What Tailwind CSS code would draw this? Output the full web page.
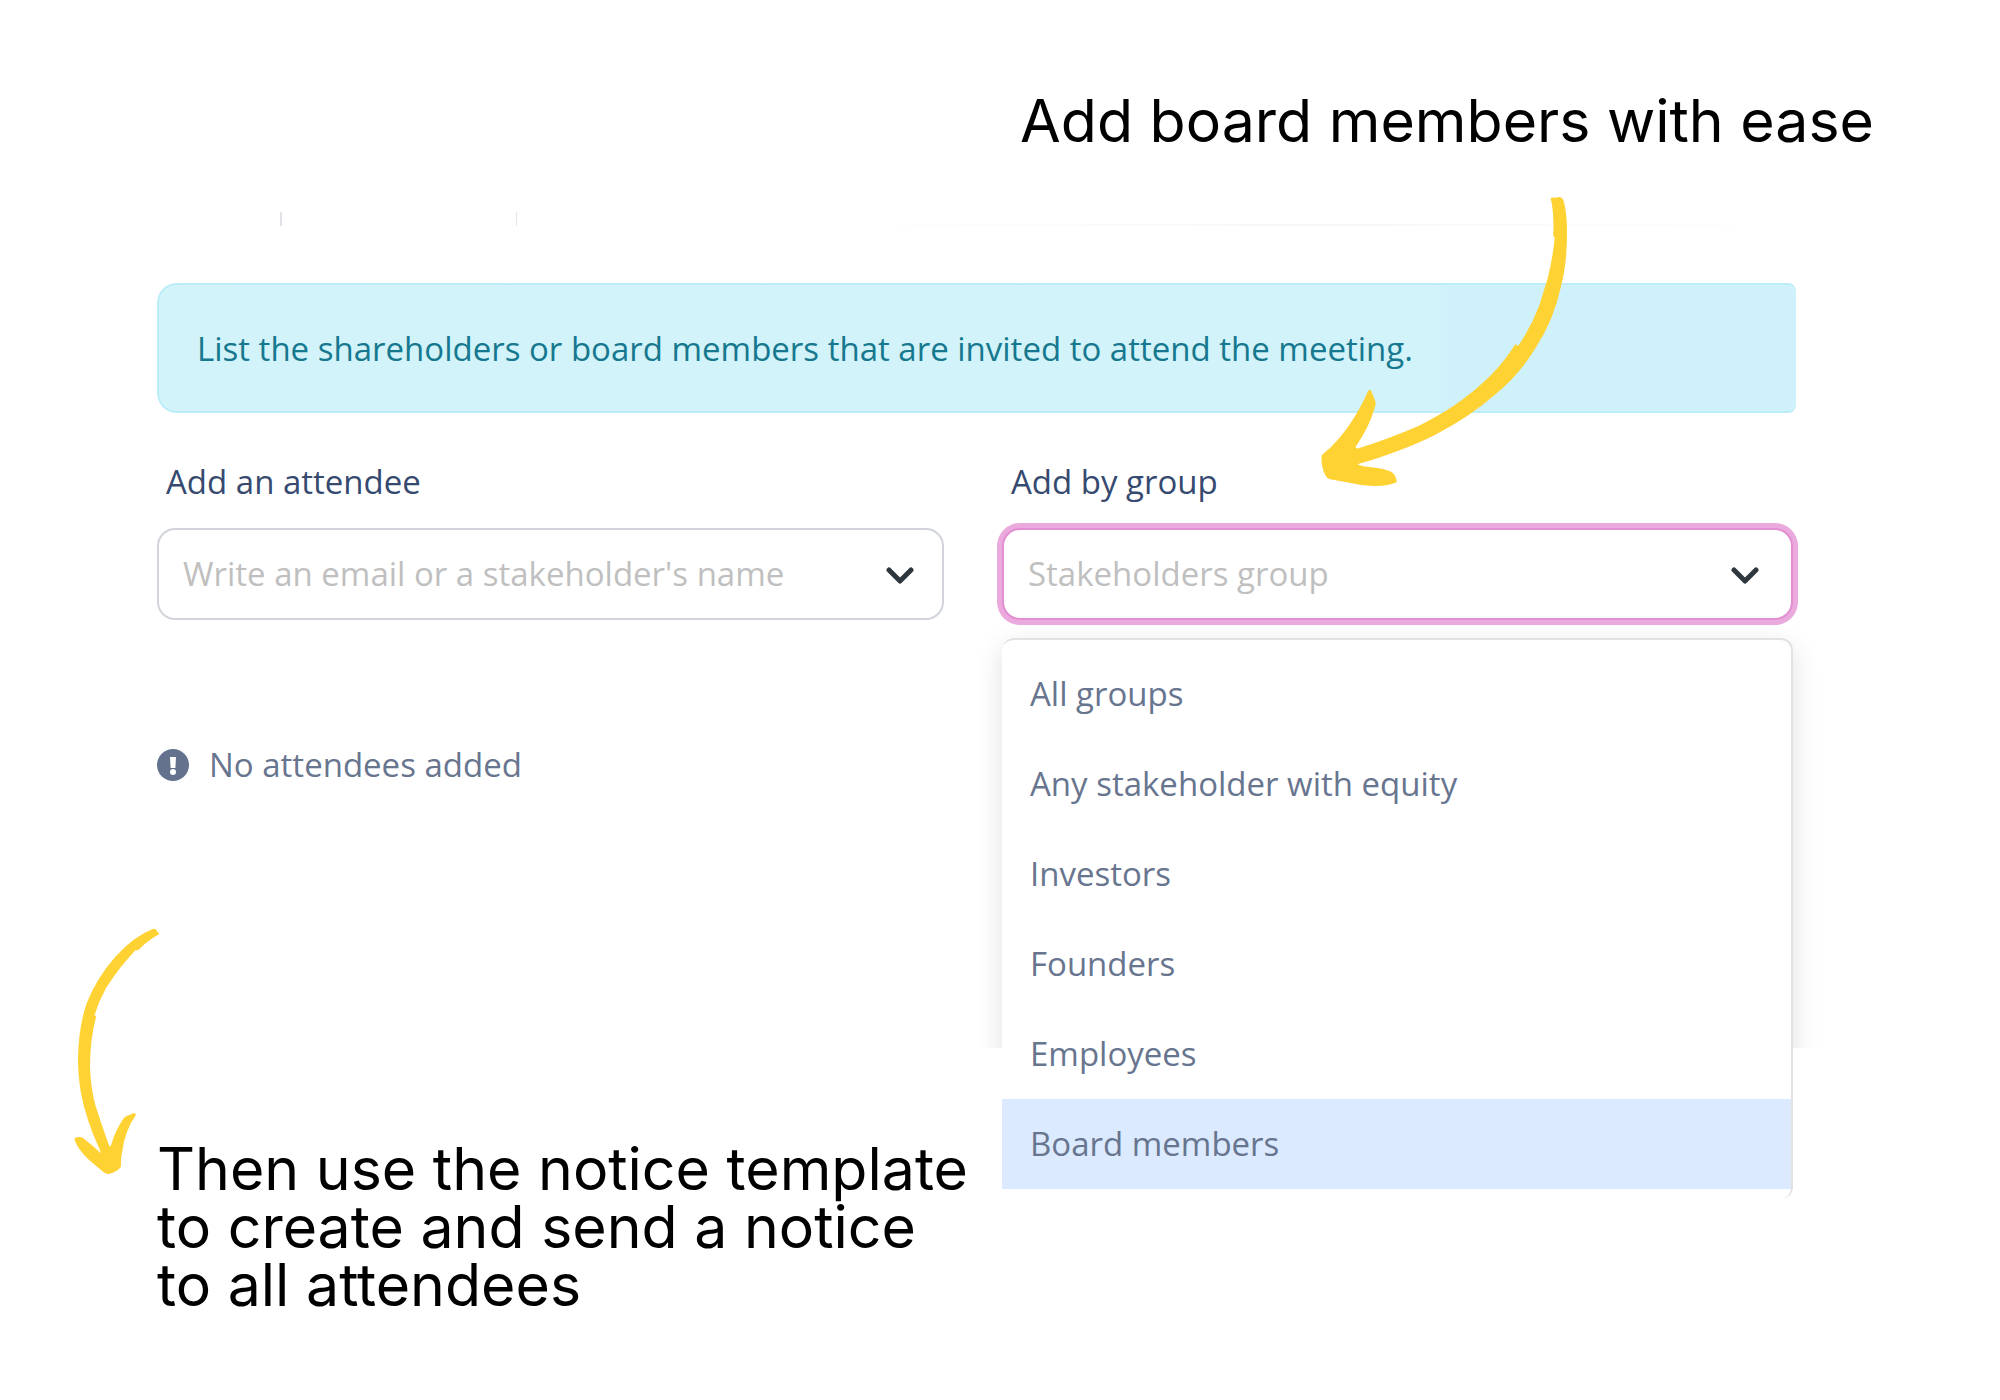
<!DOCTYPE html>
<html lang="en">
<head>
    <meta charset="UTF-8">
    <meta name="viewport" content="width=device-width, initial-scale=1.0">
    <title>Meeting attendees</title>
    <script src="https://cdn.jsdelivr.net/npm/@tailwindcss/browser@4"></script>
</head>
<body class="min-h-screen bg-white font-['Open_Sans',sans-serif] text-[33px] leading-[48px]">
    <!-- Headline -->
    <header class="relative flex justify-end pt-[91px] pr-[126px]">
        <h1 class="font-['Inter',sans-serif] text-[59px] leading-[60px] text-black whitespace-nowrap">Add board members with ease</h1>
        <svg class="absolute top-[180px] right-[400px] z-20 size-[320px]" viewBox="0 0 960 960" fill="#ffd233" aria-hidden="true">
            <path d="M812 54 Q817 52 828 53 Q836 50 842 52 Q850 56 852 66 Q862 110 861 160 Q861 250 844 315 Q822 420 768 502 Q718 584 650 640 Q565 715 460 767 Q370 812 232 853 Q250 861 285 863 Q312 866 318 870 Q346 874 351 906 Q325 919 280 918 Q240 917 200 907 L150 898 Q140 895 136 886 Q122 858 125 827 Q130 820 150 804 Q218 738 264 634 Q269 625 274 634 L286 664 Q289 674 282 690 Q266 744 227 800 Q226 808 236 805 Q330 775 415 738 Q475 708 520 678 Q585 634 636 582 Q674 543 705 494 Q710 489 710 497 L716 496 Q756 436 778 376 L804 292 Q820 225 824 172 Q818 172 820 160 Q822 95 812 54 Z"/>
        </svg>
    </header>

    <main class="pr-[204px] pb-16 pl-[157px]">
        <!-- Lower edge of the tab bar -->
        <div class="mt-[61px] flex h-[14px] items-end">
            <div class="ml-[123px] h-full w-[2px] bg-[#dfe2e7]"></div>
            <div class="ml-[234px] h-full w-px bg-[#e3e5ea]"></div>
            <div class="ml-[320px] h-[2px] flex-1 bg-linear-to-r from-white via-[#f6f7f9] to-white"></div>
        </div>

        <div role="note" class="mt-[57px] flex h-[130px] items-center rounded-l-[20px] rounded-r-[8px] border-2 border-r-0 border-[#bbeef8] bg-linear-to-r from-[#d1f3f9] from-78% to-[#cff1fc] to-79% pt-[2px] pl-[38px] text-[#16788f]">
            <p class="whitespace-nowrap">List the shareholders or board members that are invited to attend the meeting.</p>
        </div>

        <div class="mt-[45px] grid grid-cols-[787fr_791fr] gap-[58px] pr-[3px]">
            <!-- Left column -->
            <section class="min-w-0">
                <label for="attendee" class="block pl-[9px] text-[#364a70]">Add an attendee</label>
                <div class="mt-[22px] flex h-[92px] items-center rounded-[18px] border-2 border-[#d1d5db] pr-[26px] pl-6">
                    <input id="attendee" type="text" placeholder="Write an email or a stakeholder's name" class="min-w-0 flex-1 outline-none placeholder:text-[#bfbfbf]">
                    <svg class="h-5 w-8" viewBox="0 0 32 20" fill="none" stroke="#2f373e" stroke-width="5" stroke-linecap="round" stroke-linejoin="round" aria-hidden="true">
                        <path d="M5 6 L16 17 L27 6"/>
                    </svg>
                </div>

                <p class="mt-[121px] flex items-center gap-[20px] text-[#68758f]">
                    <svg class="size-8" viewBox="0 0 32 32" aria-hidden="true">
                        <circle cx="16" cy="16" r="16" fill="#64728d"/>
                        <path d="M13 8 H19 L18.400 19 H13.600 Z" fill="#fff"/>
                        <circle cx="16" cy="23" r="3" fill="#fff"/>
                    </svg>
                    No attendees added
                </p>

                <div class="relative mt-[351px]">
                    <svg class="absolute top-[-240px] left-[-107px] size-[300px]" viewBox="0 0 900 900" fill="#ffd233" aria-hidden="true">
                        <path d="M308 87 Q314 85 319 90 Q324 97 328 102 Q292 122 266 149 Q262 152 258 149 Q210 198 168 264 Q146 304 133 347 Q140 346 138 352 Q120 420 120 500 Q122 560 135 612 Q152 666 178 739 Q182 740 184 733 Q196 690 222 653 Q228 648 236 646 L252 639 Q258 640 257 646 Q226 690 217 752 Q212 774 213 800 Q200 817 175 822 Q168 822 160 816 L113 776 Q82 746 73 718 Q74 712 82 712 Q94 709 100 715 Q130 738 152 759 Q153 759 150 751 Q108 660 93 580 Q84 530 84 475 Q86 380 110 310 Q138 236 196 170 Q252 109 308 87 Z"/>
                    </svg>
                    <p class="font-['Inter',sans-serif] text-[59px] leading-[58px] text-black whitespace-nowrap">Then use the notice template<br>to create and send a notice<br>to all attendees</p>
                </div>
            </section>

            <!-- Right column -->
            <section class="min-w-0">
                <label for="group" class="block pl-[9px] text-[#364a70]">Add by group</label>
                <div class="relative mt-[22px]">
                    <select id="group" class="block h-[92px] w-full appearance-none rounded-[18px] border-2 border-[#e28fd2] bg-white pl-6 text-[#bfbfbf] ring-5 ring-[#eaaadd] outline-none">
                        <option>Stakeholders group</option>
                        <option>All groups</option>
                        <option>Any stakeholder with equity</option>
                        <option>Investors</option>
                        <option>Founders</option>
                        <option>Employees</option>
                        <option>Board members</option>
                    </select>
                    <svg class="pointer-events-none absolute top-9 right-[32px] h-5 w-8" viewBox="0 0 32 20" fill="none" stroke="#2f373e" stroke-width="5" stroke-linecap="round" stroke-linejoin="round" aria-hidden="true">
                        <path d="M5 6 L16 17 L27 6"/>
                    </svg>
                </div>

                <div class="relative mt-[18px]">
                    <!-- Soft shadow at the sides of the open list -->
                    <div class="absolute inset-x-[-40px] top-[-12px] h-[422px] overflow-hidden px-[40px] pt-[12px]">
                        <div class="h-[560px] rounded-[12px] shadow-[0_8px_28px_rgba(0,0,0,0.12)]"></div>
                    </div>
                    <ul role="listbox" aria-label="Stakeholders group" class="relative rounded-[12px] border-t-2 border-r-2 border-[#e2e2e2] bg-white pt-[9px] pb-[10px] text-[#68758f]">
                        <li role="option" class="flex h-[90px] items-center pl-7">All groups</li>
                        <li role="option" class="flex h-[90px] items-center pl-7">Any stakeholder with equity</li>
                        <li role="option" class="flex h-[90px] items-center pl-7">Investors</li>
                        <li role="option" class="flex h-[90px] items-center pl-7">Founders</li>
                        <li role="option" class="flex h-[90px] items-center pl-7">Employees</li>
                        <li role="option" aria-selected="true" class="flex h-[90px] items-center bg-[#dbeafe] pl-7">Board members</li>
                    </ul>
                </div>
            </section>
        </div>
    </main>
</body>
</html>
